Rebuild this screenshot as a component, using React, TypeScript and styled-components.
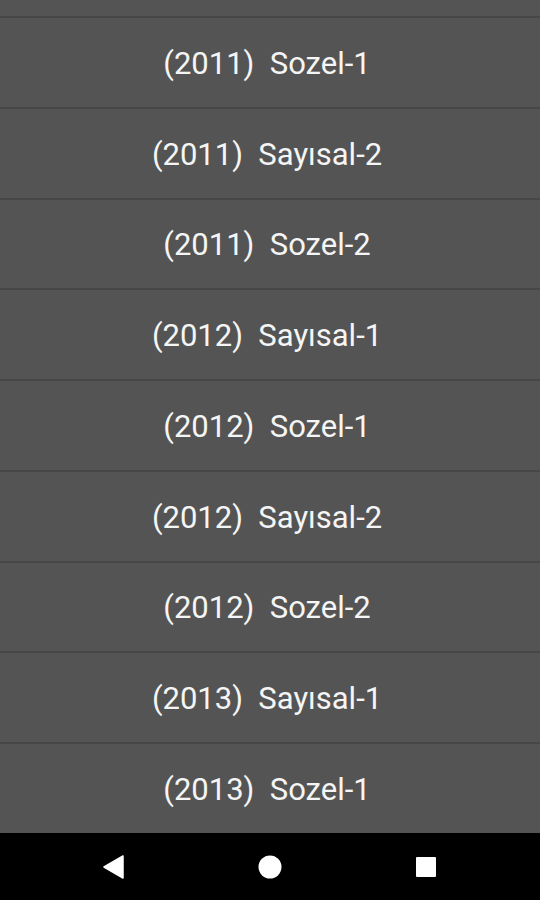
import styled, { createGlobalStyle } from 'styled-components';

const GlobalStyle = createGlobalStyle`
  html, body {
    margin: 0;
    padding: 0;
    background: #000;
  }
`;

const Screen = styled.div`
  width: 540px;
  height: 900px;
  display: flex;
  flex-direction: column;
  background: #545454;
  font-family: Roboto, "Liberation Sans", sans-serif;
  overflow: hidden;
`;

const ListViewport = styled.div`
  height: 833px;
  overflow: hidden;
  background: #545454;
`;

const List = styled.ul`
  list-style: none;
  margin: 0;
  padding: 0;
`;

// bottom edge of the row scrolled off the top
const PeekRow = styled.li`
  height: 18px;
  box-sizing: border-box;
  border-bottom: 2px solid #474747;
`;

const Row = styled.li`
  height: 90.75px;
  box-sizing: border-box;
  border-bottom: 2px solid #474747;
  display: flex;
  align-items: center;
  justify-content: center;
  color: #f5f5f5;
  font-size: 31px;
  white-space: pre;
  padding: 2px 6px 0 0;
`;

const NavBar = styled.div`
  flex: 1;
  background: #000;
  display: flex;
  align-items: center;
  justify-content: center;
`;

const NavSlot = styled.div`
  width: 156px;
  display: flex;
  justify-content: center;
`;

const exams = [
  '(2011)  Sozel-1',
  '(2011)  Sayısal-2',
  '(2011)  Sozel-2',
  '(2012)  Sayısal-1',
  '(2012)  Sozel-1',
  '(2012)  Sayısal-2',
  '(2012)  Sozel-2',
  '(2013)  Sayısal-1',
  '(2013)  Sozel-1',
];

export default function App() {
  return (
    <>
      <GlobalStyle />
      <Screen>
        <ListViewport>
          <List>
            <PeekRow />
            {exams.map((title) => (
              <Row key={title}>{title}</Row>
            ))}
          </List>
        </ListViewport>
        <NavBar>
          <NavSlot>
            <svg width="22" height="24" viewBox="0 0 22 24">
              <path d="M20 1 L20 23 L1 12 Z" fill="#fff" stroke="#fff" strokeWidth="1.5" strokeLinejoin="round" />
            </svg>
          </NavSlot>
          <NavSlot>
            <svg width="24" height="24" viewBox="0 0 24 24">
              <circle cx="12" cy="12" r="11.5" fill="#fff" />
            </svg>
          </NavSlot>
          <NavSlot>
            <svg width="22" height="22" viewBox="0 0 22 22">
              <rect x="1" y="1" width="20" height="20" rx="1" fill="#fff" />
            </svg>
          </NavSlot>
        </NavBar>
      </Screen>
    </>
  );
}
